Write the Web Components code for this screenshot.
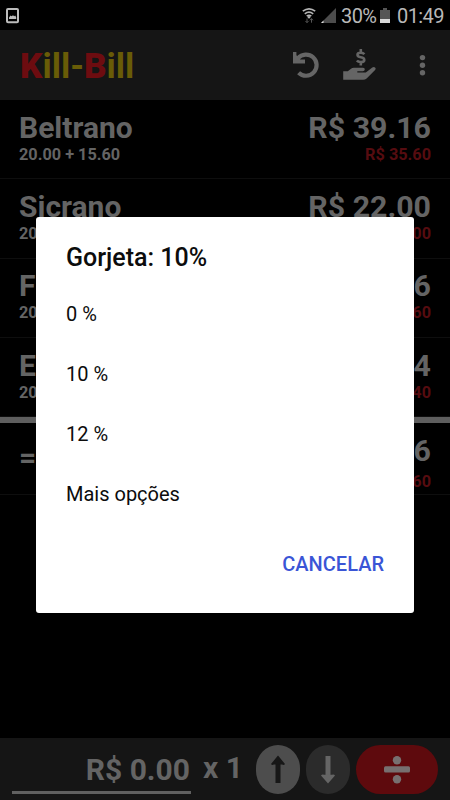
<!DOCTYPE html>
<html lang="pt-BR">
<head>
<meta charset="utf-8">
<title>Kill-Bill</title>
<style>
html,body{margin:0;height:100%;background:#000;overflow:hidden}
body{font-family:Roboto,"Liberation Sans",sans-serif;color:#646464}
</style>
</head>
<body>
<kb-app></kb-app>
<script>
const define = (name, html, init) => {
  const t = document.createElement('template');
  t.innerHTML = html;
  customElements.define(name, class extends HTMLElement {
    constructor() {
      super();
      this.attachShadow({mode: 'open'}).appendChild(t.content.cloneNode(true));
    }
    connectedCallback() { if (init) init(this, this.shadowRoot); }
  });
};

define('kb-status', `
<style>
:host{display:flex;height:30px;align-items:center;background:#000;color:#b9b9b9;padding:0 6px;box-sizing:border-box;font-size:20px;line-height:30px}
svg{display:block;flex:none}
.sp{flex:1}
.pct{width:36px;margin:2px 2px 0 5px;white-space:nowrap;letter-spacing:-.6px}
.clock{width:47px;margin:2px 0 0 6px;white-space:nowrap;letter-spacing:-.6px}
</style>
<svg width="14" height="30" viewBox="0 0 14 30"><rect x="1" y="9" width="11" height="13.2" rx="1" fill="none" stroke="#bcbcbc" stroke-width="2"/><path d="M3 19v-1.5l1.500-2 1.200.7 1.300-1 1.200 1 1-.7 1 1.800V19z" fill="#bcbcbc"/></svg>
<span class="sp"></span>
<svg width="34" height="30" viewBox="302 0 34 30"><g fill="none" stroke="#b4b4b4" stroke-width="1.7"><path d="M302.800 11.200q6.200-4.800 12.400 0M304.800 13.800q4.200-3.400 8.400 0M306.700 16.200q2.300-1.800 4.600 0"/></g><circle cx="309" cy="17.300" r="1.200" fill="#b4b4b4"/><path d="M307 18.500v4M305.500 21l1.500 1.700 1.500-1.700M311.500 22.700v-4M310 20.300l1.500-1.700 1.500 1.700" stroke="#555" fill="none"/><path d="M336 8v15h-15z" fill="#4c4c4c"/><path d="M323.500 20.500v2.500h-2.500z" fill="#ddd"/></svg>
<span class="pct">30%</span>
<svg width="12" height="30" viewBox="0 0 12 30"><path d="M4 8h4v2h3v9H1v-9h3z" fill="#555"/><path d="M1 19h10v4H1z" fill="#d8d8d8"/></svg>
<span class="clock">01:49</span>
`);

define('kb-toolbar', `
<style>
:host{display:flex;height:70px;background:#151515;box-sizing:border-box;padding-left:20px}
h1{margin:0;font-size:35px;line-height:70px;padding-top:1.500px;font-weight:700;color:#695c07;flex:1}
b{color:#6d0c10}
svg{display:block;flex:none}
</style>
<h1><b>K</b>ill-<b>B</b>ill</h1>
<svg width="160" height="70" viewBox="290 30 160 70">
<path d="M298 58.200A10.600 10.600 0 1 1 298.600 72.700" fill="none" stroke="#656565" stroke-width="4.200"/>
<path d="M293 52v11.600h12v-4.200h-4.600l-4-4.200V52z" fill="#656565"/>
<path d="M343.200 71.200h4.600l3.200-2.500q1.200-1 3-1h9q2 0 1.800 1.800-.2 1.700-2 1.700h-5.500v1.300h8.500l6.500-5q1.500-1 2.800 0 1.300 1.200 0 2.500l-8.500 8.400q-1.500 1.400-3.500 1.400h-19.900z" fill="#656565"/>
<path d="M364.300 54.300q-1-1.500-3.600-1.500-3.200 0-3.200 2t3.300 2.500q3.500.6 3.500 2.600t-3.400 2.100q-2.900 0-4-1.600M360.800 49v3.800M360.800 62v3.600" fill="none" stroke="#656565" stroke-width="2.600"/>
<g fill="#656565"><circle cx="422.500" cy="57.600" r="2.700"/><circle cx="422.500" cy="65.200" r="2.700"/><circle cx="422.500" cy="72.700" r="2.700"/></g></svg>
`);

define('kb-row', `
<style>
:host{display:grid;grid-template-columns:1fr auto;height:79.300px;box-sizing:border-box;padding:10.700px 19px 0;border-bottom:1.500px solid #0e0e0e;font-weight:700;align-content:start}
.big{font-size:30px;line-height:34px;white-space:pre}
.r.big{font-size:30.300px}
.sub{font-size:16.300px;line-height:20px;white-space:pre}
.r{text-align:right}
.red{color:#560c10}
:host([total]){height:71.500px;padding-top:11px}
:host([total]) .l{padding-top:7px;height:27px}
:host([total]) .sub{padding-top:4px}
</style>
<div class="big l"></div><div class="big r"></div>
<div class="sub s"></div><div class="sub r red"></div>
`, (el, r) => {
  r.querySelector('.l').textContent = el.getAttribute('name');
  r.querySelector('.big.r').textContent = el.getAttribute('amount');
  r.querySelector('.s').textContent = el.getAttribute('items') || '';
  r.querySelector('.red').textContent = el.getAttribute('net');
});

define('kb-entry', `
<style>
:host{display:flex;height:62px;background:#151515;box-sizing:border-box;padding:7px 12px 6px;align-items:flex-start;font-weight:700;font-size:30px}
.amt{width:179px;height:49px;box-sizing:border-box;border-bottom:3px solid #606060;text-align:right;line-height:49px;padding-right:1px;white-space:pre}
.x{width:65px;box-sizing:border-box;padding-left:12px;line-height:46px;white-space:pre}
.b{width:44px;height:49px;border-radius:22px/23px;background:#4d4d4d;margin-right:6px;flex:none}
.d{background:#2b2b2b}
.p{width:82px;border-radius:25px;background:#5e0a0d;margin:0}
svg{display:block}
</style>
<div class="amt">R$ 0.00</div><div class="x">x 1</div>
<div class="b"><svg width="44" height="49"><path d="M22 38V15" stroke="#171717" stroke-width="5"/><path d="M22 10.500l7 8.500q-1 1.500-3 .5H18q-2 1-3-.5z" fill="#171717"/></svg></div>
<div class="b d"><svg width="44" height="49"><path d="M22 11v23" stroke="#656565" stroke-width="5"/><path d="M22 38.500l7-8q-1-1.500-3-.8H18q-2-.7-3 .8z" fill="#656565"/></svg></div>
<div class="b p"><svg width="82" height="49" fill="#777070"><circle cx="41" cy="15.200" r="4.200"/><rect x="28" y="21.200" width="26" height="6.400" rx="1.500"/><circle cx="41" cy="34.200" r="4.200"/></svg></div>
`);

define('kb-dialog', `
<style>
:host{display:block;width:378px;height:396px;box-sizing:border-box;background:#fff;border-radius:3px;color:#0c0c0c;padding:25px 30px 0}
h2{margin:0 0 10.500px;font-size:25px;line-height:31px;font-weight:500}
footer{text-align:right;color:#3a55d6;font-weight:500;font-size:20px;line-height:30px;padding-top:25px}
</style>
<h2>Gorjeta: 10%</h2>
<slot></slot>
<footer>CANCELAR</footer>
`);
define('kb-option', `<style>:host{display:block;font-size:20px;line-height:60px;height:60px;white-space:pre}</style><slot></slot>`);

define('kb-app', `
<style>
:host{display:flex;flex-direction:column;width:450px;height:800px;background:#000;position:relative;overflow:hidden}
.bar{height:6px;background:#5e5e5e;flex:none}
.sp{flex:1}
kb-dialog{position:absolute;left:36px;top:217px}
kb-status,kb-toolbar,kb-row,kb-entry{flex:none}
</style>
<kb-status></kb-status>
<kb-toolbar></kb-toolbar>
<kb-row name="Beltrano" amount="R$ 39.16" items="20.00 + 15.60" net="R$ 35.60"></kb-row>
<kb-row name="Sicrano" amount="R$ 22.00" items="20" net="00"></kb-row>
<kb-row name="F" amount="6" items="20" net="60"></kb-row>
<kb-row name="E" amount="4" items="20" net="40"></kb-row>
<div class="bar"></div>
<kb-row total name="=" amount="6" net="60"></kb-row>
<div class="sp"></div>
<kb-entry></kb-entry>
<kb-dialog>
<kb-option>0 %</kb-option><kb-option>10 %</kb-option><kb-option>12 %</kb-option><kb-option>Mais opções</kb-option>
</kb-dialog>
`);
</script>
</body>
</html>
